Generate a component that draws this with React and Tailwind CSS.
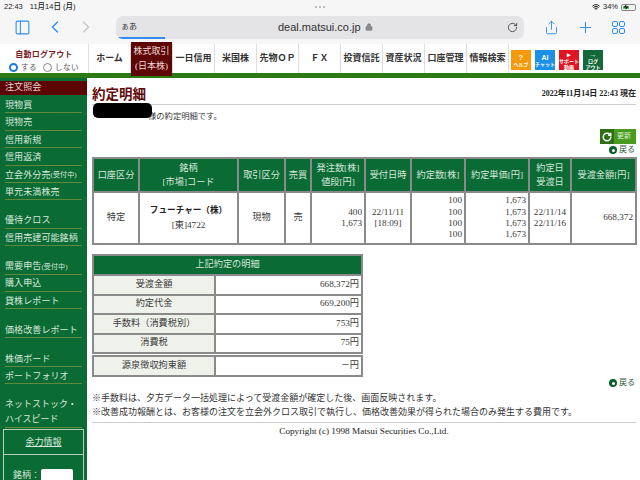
import { ChevronLeft, ChevronRight, Plus, RotateCw, Lock, Wifi, Share, PanelLeft, Zap } from 'lucide-react';

const serif = "font-['Liberation_Serif','Noto_Sans_CJK_JP',serif]";
const sans = "font-['Liberation_Sans','Noto_Sans_CJK_JP',sans-serif]";

const navItems = ['ホーム', '株式取引', '一日信用', '米国株', '先物ＯＰ', 'ＦＸ', '投資信託', '資産状況', '口座管理', '情報検索'];

const sideGroups = [
  { gap: '', items: ['現物買', '現物売', '信用新規', '信用返済', ['立会外分売', '(受付中)'], '単元未満株売'] },
  { gap: 'mt-[11px]', items: ['優待クロス', '信用売建可能銘柄'] },
  { gap: 'mt-[11px]', items: [['需要申告', '(受付中)'], '購入申込', '貸株レポート'] },
  { gap: 'mt-[11.5px]', items: ['価格改善レポート'] },
  { gap: 'mt-[11.5px]', items: ['株価ボード', 'ポートフォリオ'] },
];

const summaryRows = [
  ['受渡金額', '668,372円'],
  ['約定代金', '669,200円'],
  ['手数料（消費税別）', '753円'],
  ['消費税', '75円'],
];

function BackLink() {
  return (
    <div className="flex items-center justify-end gap-[2px] text-[8px] leading-none text-[#2a5a3a]">
      <span className="flex h-[8px] w-[8px] items-center justify-center rounded-full bg-[#0b5f2e]">
        <span className="h-[3px] w-[3px] rounded-full bg-white" />
      </span>
      <span className="w-[17px]">戻る</span>
    </div>
  );
}

function MiniButton({ bg, top, lines }) {
  return (
    <div className={`flex h-[20px] w-[20px] flex-col items-center justify-center overflow-hidden text-[5px] font-bold leading-[6px] text-white ${bg} ${sans}`}>
      <span className="text-[7px] leading-[7px]">{top}</span>
      {lines.map((l) => (
        <span key={l} className="whitespace-nowrap">{l}</span>
      ))}
    </div>
  );
}

function SideItem({ children }) {
  const label = Array.isArray(children) ? (
    <>
      {children[0]}
      <span className="text-[7px]">{children[1]}</span>
    </>
  ) : (
    children
  );
  return (
    <div className="flex h-[17.4px] items-center whitespace-nowrap border-b border-[#5f8a3c] pt-[3px] text-[9px] tracking-[0.1px] text-[#d9e8dc]">
      {label}
    </div>
  );
}

export default function App() {
  return (
    <div className={`h-[480px] w-[640px] overflow-hidden bg-white text-[#3a3a3a] ${serif}`}>
      {/* safari chrome */}
      <div className={`h-[44px] bg-[#f6f6f6] ${sans}`}>
        <div className="flex h-[14px] items-center justify-between px-1 text-[7.5px] font-medium text-[#222]">
          <div className="flex w-[120px] gap-[7px]">
            <span>22:43</span>
            <span>11月14日 (月)</span>
          </div>
          <div className="flex gap-[2px]">
            <span className="h-[2px] w-[2px] rounded-full bg-[#aaa]" />
            <span className="h-[2px] w-[2px] rounded-full bg-[#aaa]" />
            <span className="h-[2px] w-[2px] rounded-full bg-[#aaa]" />
          </div>
          <div className="flex w-[120px] items-center justify-end gap-[3px]">
            <Wifi size={8} strokeWidth={3} />
            <span>34%</span>
            <span className="flex h-[7px] w-[15px] items-center rounded-[2px] border border-[#888] p-[1px]">
              <span className="flex h-full w-[6px] items-center justify-end bg-[#4cd964]">
                <Zap size={6} fill="#000" strokeWidth={0} />
              </span>
            </span>
          </div>
        </div>
        <div className="-mt-[1px] flex h-[28px] items-center text-[#2f8cf0]">
          <PanelLeft size={17} strokeWidth={1.5} className="ml-[14px]" />
          <ChevronLeft size={20} strokeWidth={1.6} className="ml-[14px]" />
          <ChevronRight size={20} strokeWidth={1.6} className="ml-[11px] text-[#c9c9c9]" />
          <div className="relative ml-[20px] flex h-[23px] w-[408px] items-center overflow-hidden rounded-[7px] bg-[#e4e4e6] text-[#333]">
            <span className="ml-[5px] text-[8px]">ぁあ</span>
            <span className="ml-[141px] flex items-center gap-[4px] text-[11px]">
              deal.matsui.co.jp
              <Lock size={8} fill="#888" stroke="#888" />
            </span>
            <RotateCw size={11} strokeWidth={1.7} className="absolute right-[6px] top-[6px]" />
            <span className="absolute bottom-0 left-0 h-[2px] w-[49px] bg-[#2f8cf0]" />
          </div>
          <Share size={15} strokeWidth={1.5} className="ml-[20px]" />
          <Plus size={17} strokeWidth={1.5} className="ml-[18px]" />
          <div className="ml-[18px] grid h-[13px] w-[13px] grid-cols-2 gap-[1px]">
            <span className="rounded-[2px] border border-[#2f8cf0]" />
            <span className="rounded-[2px] border border-[#2f8cf0]" />
            <span className="rounded-[2px] border border-[#2f8cf0]" />
            <span className="rounded-[2px] border border-[#2f8cf0]" />
          </div>
        </div>
      </div>

      {/* site nav */}
      <div className="flex h-[34px] border-b-[5px] border-[#2c7a14] bg-white">
        <div className="flex w-[88px] flex-col items-center pt-[5px]">
          <span className="text-[8px] font-bold leading-[12px] tracking-[0.2px] text-[#7a1f1f]">自動ログアウト</span>
          <div className="mt-[1px] flex items-center gap-[3px] text-[7.5px] leading-[11px] tracking-[0.5px] text-[#555]">
            <span className="h-[9px] w-[9px] rounded-full border-[2.5px] border-[#1f7ae0]" />
            <span className="mr-[3px]">する</span>
            <span className="h-[9px] w-[9px] rounded-full border border-[#888]" />
            <span>しない</span>
          </div>
        </div>
        {navItems.map((item) => (
          <div key={item} className="flex w-[42px] items-center justify-center border-l border-[#ddd] text-[9px] font-bold whitespace-nowrap text-[#333]">
            {item === '株式取引' ? (
              <div className="flex h-[34px] w-full flex-col items-center justify-center bg-[#5e0505] text-[9px] font-normal leading-[15px] text-[#f0dcdc]">
                <span>株式取引</span>
                <span>(日本株)</span>
              </div>
            ) : (
              item
            )}
          </div>
        ))}
        <div className="flex flex-1 items-start gap-[4px] border-l border-[#ddd] pl-[2px] pt-[6px]">
          <MiniButton bg="bg-[#f59a0c]" top="?" lines={['ヘルプ']} />
          <MiniButton bg="bg-[#1c8fe6]" top="AI" lines={['チャット']} />
          <MiniButton bg="bg-[#e01423]" top="▸" lines={['サポート', '動画']} />
          <MiniButton bg="bg-[#14693a]" top="→" lines={['ログ', 'アウト']} />
        </div>
      </div>

      <div className="flex h-[402px]">
        {/* sidebar */}
        <aside className="relative h-full w-[87px] shrink-0 overflow-hidden bg-[#0b6b35] pt-[3px]">
          <div className="flex h-[14px] items-center bg-[#5e0505] pl-[5px] text-[9px] tracking-[0.1px] text-[#e8d8d8]">注文照会</div>
          <div className="px-[5px] pt-[1px]">
            {sideGroups.map((g, i) => (
              <div key={i} className={g.gap}>
                {g.items.map((item) => (
                  <SideItem key={item.toString()}>{item}</SideItem>
                ))}
              </div>
            ))}
            <div className="mt-[13px] border-b border-[#5f8a3c] pb-[1px] text-[9px] leading-[14.5px] whitespace-nowrap text-[#d9e8dc]">
              <div>ネットストック・</div>
              <div>ハイスピード</div>
            </div>
          </div>
          <div className="mx-[3px] mt-[1px] border border-[#b9cfbd]">
            <div className="h-[25px] border-b border-[#b9cfbd] pt-[6px] text-center text-[9px] leading-[12px] text-[#d9e8dc] underline">余力情報</div>
            <div className="flex items-start gap-[1px] pl-[9px] pt-[15px] text-[9px] leading-[11px] text-[#d9e8dc]">
              <span>銘柄：</span>
              <span className="-mt-[1px] h-[20px] w-[32px] rounded-[2px] bg-white" />
            </div>
          </div>
        </aside>

        {/* main */}
        <main className="relative min-w-0 flex-1 pl-[5px] pr-[4px] pt-[5px]">
          <div className="flex h-[22px] items-start justify-between border-b border-[#ccc]">
            <h1 className="text-[13.5px] leading-[24px] font-bold text-[#5e0a0a]">約定明細</h1>
            <span className="mt-[5px] text-[8px] leading-[12px] font-bold text-[#222]">2022年11月14日 22:43 現在</span>
          </div>
          <span className="absolute left-[6px] top-[25px] h-[15px] w-[59px] rounded-[5px] bg-black" />
          <p className="mt-[5px] pl-[56px] text-[8.3px] leading-[14px] whitespace-nowrap">様の約定明細です。</p>

          <div className="mt-[5px] flex justify-end">
            <div className="flex h-[15px] w-[36px] items-center bg-[#4a9a22] text-[7px] text-[#dcefd0]">
              <span className="flex h-full w-[14px] items-center justify-center bg-[#2f6f16] text-white">
                <RotateCw size={10} strokeWidth={3.5} />
              </span>
              <span className="ml-[3px]">更新</span>
            </div>
          </div>
          <div className="mt-[2px] h-[9px]">
            <BackLink />
          </div>

          <table className="mt-[2px] w-[543px] table-fixed border-collapse border-2 border-[#8a8a8a] text-center text-[9.2px] leading-[14px]">
            <colgroup>
              <col className="w-[46px]" />
              <col className="w-[99px]" />
              <col className="w-[47px]" />
              <col className="w-[26px]" />
              <col className="w-[54px]" />
              <col className="w-[46px]" />
              <col className="w-[54px]" />
              <col className="w-[64px]" />
              <col className="w-[42px]" />
              <col className="w-[65px]" />
            </colgroup>
            <thead>
              <tr className="h-[34px] bg-[#0b6b35] text-[#d6e6da]">
                <th className="border-2 border-[#8a8a8a] font-normal">口座区分</th>
                <th className="border-2 border-[#8a8a8a] font-normal">銘柄<br />[市場]コード</th>
                <th className="border-2 border-[#8a8a8a] font-normal">取引区分</th>
                <th className="border-2 border-[#8a8a8a] font-normal">売買</th>
                <th className="border-2 border-[#8a8a8a] font-normal">発注数[株]<br />値段[円]</th>
                <th className="border-2 border-[#8a8a8a] font-normal">受付日時</th>
                <th className="border-2 border-[#8a8a8a] font-normal">約定数[株]</th>
                <th className="border-2 border-[#8a8a8a] font-normal">約定単価[円]</th>
                <th className="border-2 border-[#8a8a8a] font-normal">約定日<br />受渡日</th>
                <th className="border-2 border-[#8a8a8a] font-normal">受渡金額[円]</th>
              </tr>
            </thead>
            <tbody>
              <tr className="h-[52px] leading-[11.3px]">
                <td className="border-2 border-[#8a8a8a]">特定</td>
                <td className="border-2 border-[#8a8a8a] leading-[15px]"><b className="text-[8.6px] text-[#222]">フューチャー（株）</b><br />[東]4722</td>
                <td className="border-2 border-[#8a8a8a]">現物</td>
                <td className="border-2 border-[#8a8a8a]">売</td>
                <td className="border-2 border-[#8a8a8a] pr-[2px] text-right">400<br />1,673</td>
                <td className="border-2 border-[#8a8a8a]">22/11/11<br />[18:09]</td>
                <td className="border-2 border-[#8a8a8a] pr-[2px] text-right">100<br />100<br />100<br />100</td>
                <td className="border-2 border-[#8a8a8a] pr-[2px] text-right">1,673<br />1,673<br />1,673<br />1,673</td>
                <td className="border-2 border-[#8a8a8a]">22/11/14<br />22/11/16</td>
                <td className="border-2 border-[#8a8a8a] pr-[2px] text-right">668,372</td>
              </tr>
            </tbody>
          </table>

          <table className="mt-[9px] w-[271px] table-fixed border-collapse border-2 border-[#8a8a8a] text-[9.2px]">
            <colgroup>
              <col className="w-[122px]" />
              <col />
            </colgroup>
            <thead>
              <tr className="h-[20px] bg-[#0b6b35] text-[#d6e6da]">
                <th colSpan={2} className="border-2 border-[#8a8a8a] font-normal">上記約定の明細</th>
              </tr>
            </thead>
            <tbody>
              {summaryRows.map(([label, value]) => (
                <tr key={label} className="h-[19.5px]">
                  <td className="border-2 border-[#8a8a8a] bg-[#eef2ea] text-center">{label}</td>
                  <td className="border-2 border-[#8a8a8a] pr-[2px] text-right">{value}</td>
                </tr>
              ))}
            </tbody>
          </table>

          <table className="mt-[1px] w-[271px] table-fixed border-collapse border-2 border-[#8a8a8a] text-[9.2px]">
            <colgroup>
              <col className="w-[122px]" />
              <col />
            </colgroup>
            <tbody>
              <tr className="h-[20px]">
                <td className="border-2 border-[#8a8a8a] bg-[#eef2ea] text-center">源泉徴収拘束額</td>
                <td className="border-2 border-[#8a8a8a] pr-[2px] text-right">－円</td>
              </tr>
            </tbody>
          </table>

          <div className="mt-[2px] h-[9px]">
            <BackLink />
          </div>

          <div className="mt-[4px] border-b border-[#ccc] pb-[3px] text-[9px] leading-[13.5px] whitespace-nowrap text-[#333]">
            <p>※手数料は、夕方データ一括処理によって受渡金額が確定した後、画面反映されます。</p>
            <p>※改善成功報酬とは、お客様の注文を立会外クロス取引で執行し、価格改善効果が得られた場合のみ発生する費用です。</p>
          </div>
          <p className="mt-[2px] text-center text-[9.2px] leading-[12px] text-[#222]">Copyright (c) 1998 Matsui Securities Co.,Ltd.</p>
        </main>
      </div>
    </div>
  );
}
